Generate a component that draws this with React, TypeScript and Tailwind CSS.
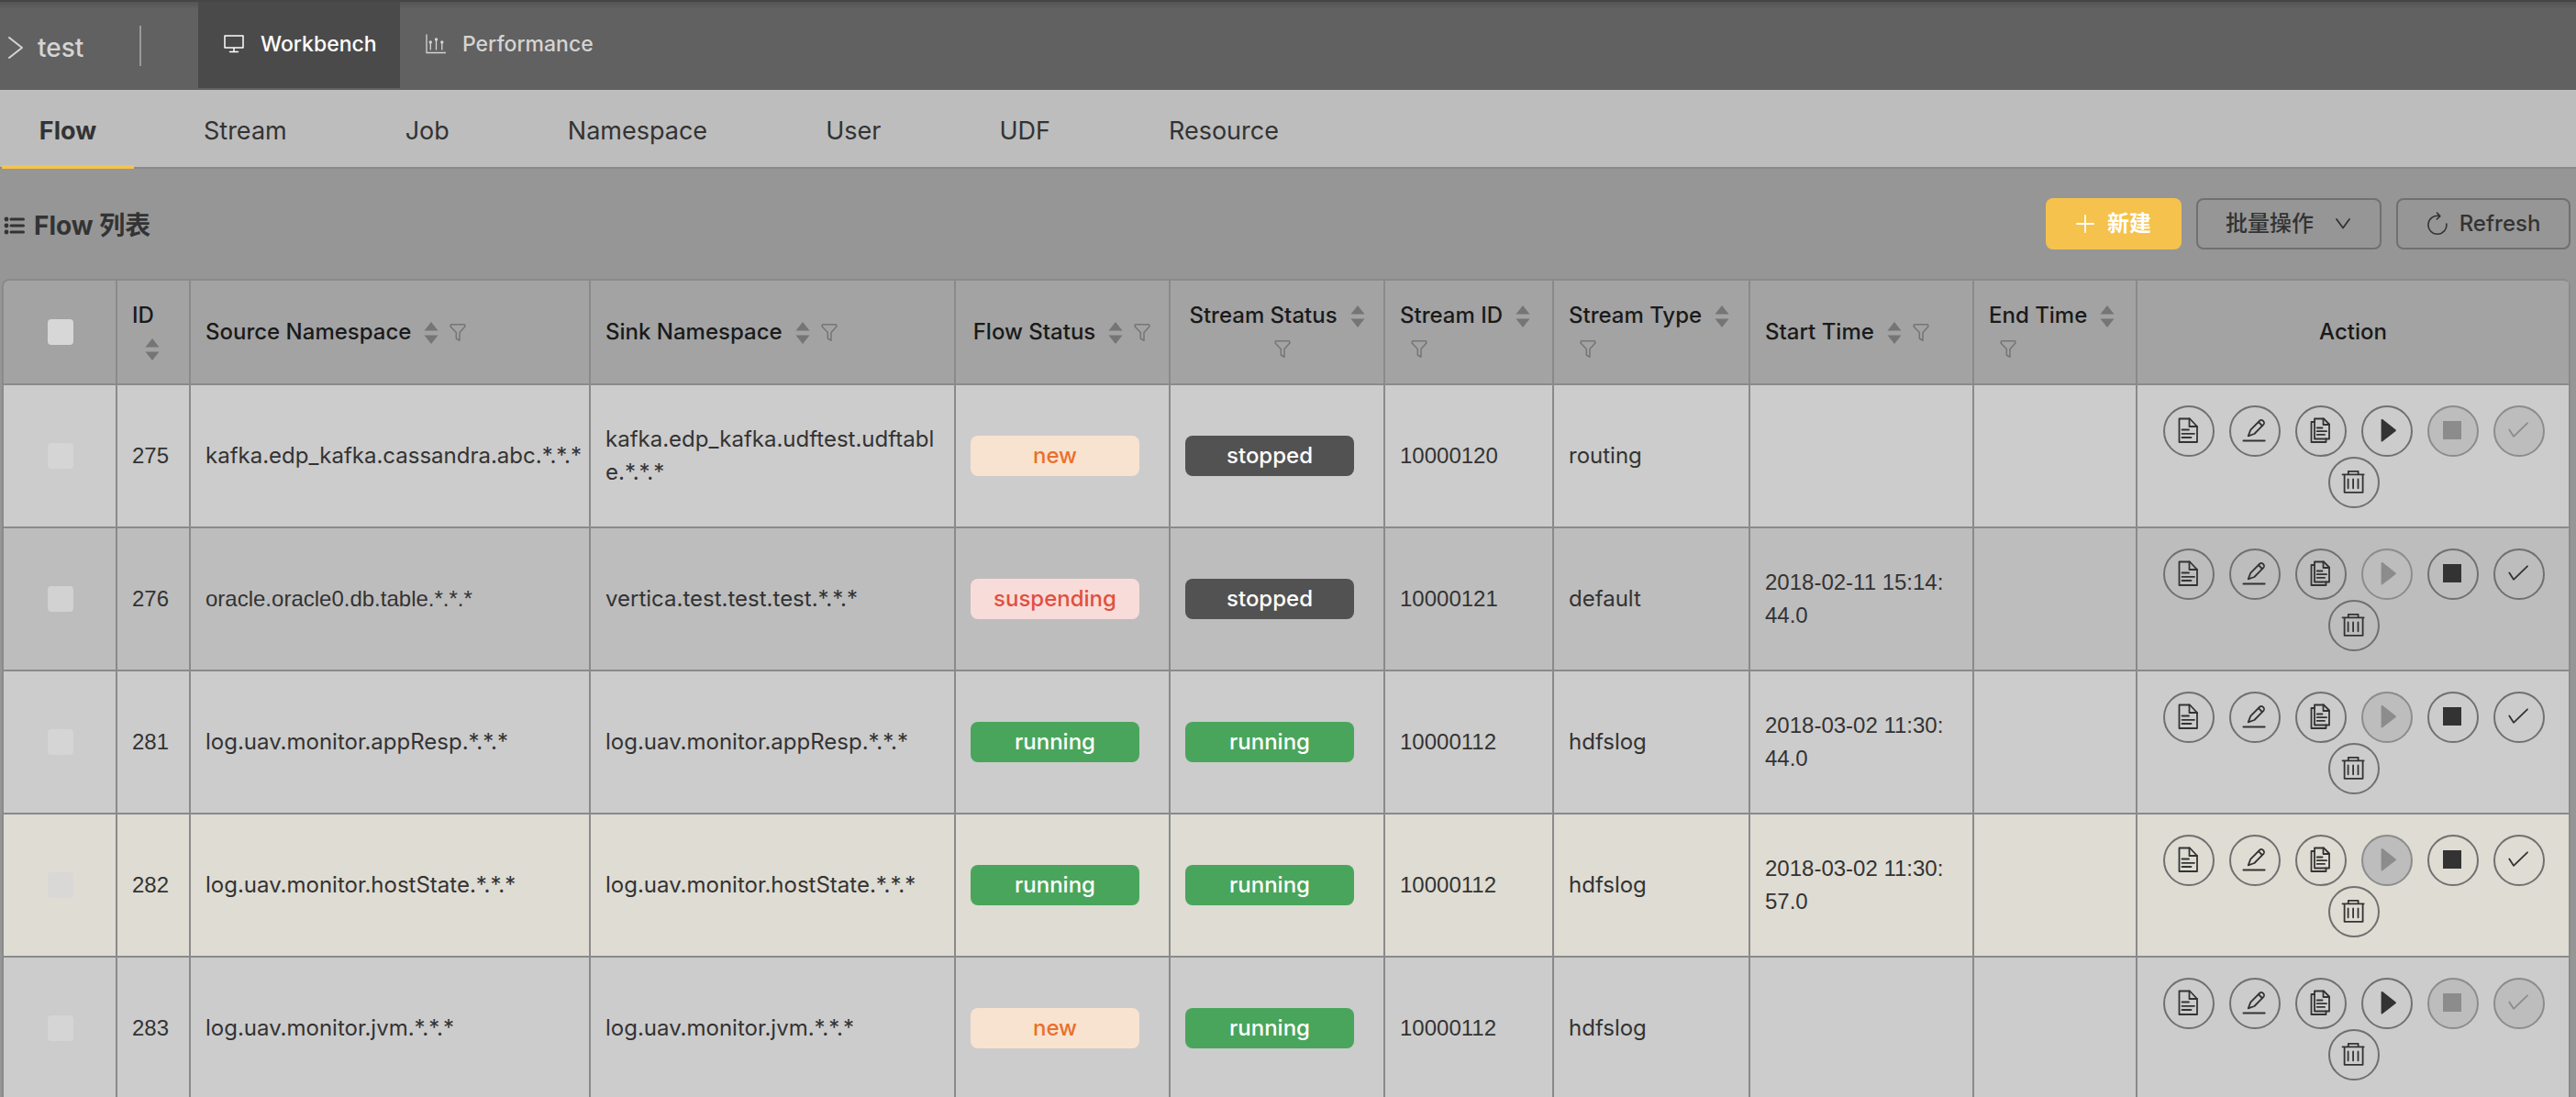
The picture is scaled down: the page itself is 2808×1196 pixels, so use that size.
import React from "react";

type Status = "new" | "stopped" | "suspending" | "running";

interface Flow {
  id: number;
  source: string;
  sink: string;
  flowStatus: Status;
  streamStatus: Status;
  streamId: string;
  streamType: string;
  startTime: string;
  disabled: string[];
  hovered?: boolean;
}

const flows: Flow[] = [
  { id: 275, source: "kafka.edp_kafka.cassandra.abc.*.*.*", sink: "kafka.edp_kafka.udftest.udftable.*.*.*", flowStatus: "new", streamStatus: "stopped", streamId: "10000120", streamType: "routing", startTime: "", disabled: ["stop", "effect"] },
  { id: 276, source: "oracle.oracle0.db.table.*.*.*", sink: "vertica.test.test.test.*.*.*", flowStatus: "suspending", streamStatus: "stopped", streamId: "10000121", streamType: "default", startTime: "2018-02-11 15:14:44.0", disabled: ["start"] },
  { id: 281, source: "log.uav.monitor.appResp.*.*.*", sink: "log.uav.monitor.appResp.*.*.*", flowStatus: "running", streamStatus: "running", streamId: "10000112", streamType: "hdfslog", startTime: "2018-03-02 11:30:44.0", disabled: ["start"] },
  { id: 282, source: "log.uav.monitor.hostState.*.*.*", sink: "log.uav.monitor.hostState.*.*.*", flowStatus: "running", streamStatus: "running", streamId: "10000112", streamType: "hdfslog", startTime: "2018-03-02 11:30:57.0", disabled: ["start"], hovered: true },
  { id: 283, source: "log.uav.monitor.jvm.*.*.*", sink: "log.uav.monitor.jvm.*.*.*", flowStatus: "new", streamStatus: "running", streamId: "10000112", streamType: "hdfslog", startTime: "", disabled: ["stop", "effect"] },
];

const tagStyles: Record<Status, string> = {
  new: "bg-[#f8e3d0] text-[#ea6f2b]",
  suspending: "bg-[#f8dcd9] text-[#e0503f]",
  stopped: "bg-[#525252] text-white",
  running: "bg-[#4aa55c] text-white",
};

const actions: { name: string; icon: React.ReactNode }[] = [
  {
    name: "detail",
    icon: (
      <>
        <path d="M17.5 14.5H29L37 23V40H17.5Z" />
        <path d="M28.5 14.5V23H37M20.5 26.5H28M20.5 30.8H34M20.5 35H30.5" />
      </>
    ),
  },
  {
    name: "edit",
    icon: (
      <>
        <path d="M20.7 33.3L23.3 26.6L33.4 16.5Q35 15.2 36.6 16.6L37.6 17.7Q38.9 19.3 37.6 20.7L27.4 31Z" />
        <path d="M32.2 18.3L35.8 22M15.4 38.5H38.7" />
      </>
    ),
  },
  {
    name: "copy",
    icon: (
      <>
        <path d="M21 14.5H31L37 20.5V36.5H21Z" />
        <path d="M30.5 14.5V21H37M21 18H17.5V40H33.5V36.5M23.7 24.5H29.5M23.7 28.2H34M23.7 31.9H32" />
      </>
    ),
  },
  { name: "start", icon: <path d="M22.5 15.8L37 27.2L22.5 38.6Z" fill="currentColor" /> },
  { name: "stop", icon: <path d="M17 17H37V37H17Z" fill="currentColor" stroke="none" /> },
  { name: "effect", icon: <path d="M17.3 26.5L22 33.8L37 19.3" /> },
  {
    name: "delete",
    icon: (
      <>
        <path d="M15.5 19.3H38.7M21.8 19V15.9H32.6V19M17.6 19.5V38.8H37.6V19.5" />
        <path d="M21.6 24.5V34.3M27.1 24.5V34.3M32.5 24.5V34.3" />
      </>
    ),
  },
];

function Sorter({ label }: { label: string }) {
  return (
    <button type="button" aria-label={"Sort by " + label} className="ml-[14px] inline-block h-6 align-middle">
      <svg width="16" height="24" viewBox="0 0 16 24" className="text-[#757575]" fill="currentColor">
        <path d="M8 0L15.5 9.5H0.5ZM8 24L0.5 14.5H15.5Z" />
      </svg>
    </button>
  );
}

function Filter({ label }: { label: string }) {
  return (
    <button type="button" aria-label={"Filter by " + label} className="ml-[11px] inline-block h-6 align-middle">
      <svg width="20" height="24" viewBox="0 0 20 24" className="text-[#757575]" fill="none" stroke="currentColor" strokeWidth="1.5" strokeLinejoin="round">
        <path d="M2.5 2.8H17.5Q18.6 4.4 17 6L12 11.5V20.3L8.3 18V11.5L3 6Q1.4 4.4 2.5 2.8Z" />
      </svg>
    </button>
  );
}

function Tag({ status }: { status: Status }) {
  return <span className={"mr-4 block rounded-lg text-center font-medium leading-[44px] " + tagStyles[status]}>{status}</span>;
}

const columns: { label: string; width: string; center?: boolean; sort?: boolean; filter?: boolean }[] = [
  { label: "ID", width: "w-20", sort: true },
  { label: "Source Namespace", width: "w-[436px]", sort: true, filter: true },
  { label: "Sink Namespace", width: "w-[398px]", sort: true, filter: true },
  { label: "Flow Status", width: "w-[234px]", center: true, sort: true, filter: true },
  { label: "Stream Status", width: "w-[234px]", center: true, sort: true, filter: true },
  { label: "Stream ID", width: "w-[184px]", sort: true, filter: true },
  { label: "Stream Type", width: "w-[214px]", sort: true, filter: true },
  { label: "Start Time", width: "w-[244px]", sort: true, filter: true },
  { label: "End Time", width: "w-[178px]", sort: true, filter: true },
  { label: "Action", width: "", center: true },
];

const tabs = ["Flow", "Stream", "Job", "Namespace", "User", "UDF", "Resource"];

const border = "border-r-2 border-b-2 border-[#8a8a8a]";
const cell = border + " px-4";
const numeric = "font-['Liberation_Sans',sans-serif] break-all";
const checkbox = "block mx-auto size-7 appearance-none rounded bg-[#d7d7d7]";

export default function App() {
  return (
    <div className="h-screen overflow-hidden bg-[#969696] font-['Inter','Noto_Sans_CJK_SC',sans-serif] text-[24px] leading-9 text-[#333]">
      <header className="flex h-[98px] items-center border-t-2 border-[#454545] bg-[linear-gradient(#555,#616161_8px)] text-[#d4d4d4]">
        <div className="flex w-[152px] items-center gap-4 pl-2 pt-1 text-[28px] font-medium">
          <svg width="17" height="26" viewBox="0 0 17 26" fill="none" stroke="currentColor" strokeWidth="2" strokeLinecap="round" strokeLinejoin="round" aria-hidden="true">
            <path d="M2 2L16 13L2 24" />
          </svg>
          test
        </div>
        <div className="mr-[62px] h-11 w-0.5 bg-[#999]" />
        <nav className="flex h-full pb-0.5 text-[23px] font-medium">
          <a href="#workbench" className="flex w-[220px] items-center gap-[18px] bg-[#4a4a4a] pb-0.5 pl-7 text-white">
            <svg width="22" height="20" viewBox="0 0 22 20" fill="none" stroke="currentColor" strokeWidth="1.5" strokeLinejoin="round" strokeLinecap="round" aria-hidden="true">
              <path d="M1 1H21V14H1ZM11 14V18M6.5 18.5H15.5" />
            </svg>
            Workbench
          </a>
          <a href="#performance" className="flex items-center gap-[18px] pb-0.5 pl-7">
            <svg width="22" height="22" viewBox="0 0 22 22" fill="none" stroke="currentColor" strokeWidth="1.3" strokeLinecap="round" aria-hidden="true">
              <path d="M1 1V20.5H21.5M5.3 17V9M11.5 17V6M17.8 17V9" />
              <g fill="currentColor" stroke="none">
                <circle cx="5.3" cy="9" r="1.7" />
                <circle cx="11.5" cy="6" r="1.7" />
                <circle cx="17.8" cy="9" r="1.7" />
              </g>
            </svg>
            Performance
          </a>
        </nav>
      </header>

      <nav className="flex h-[86px] border-b-2 border-[#8a8a8a] bg-[#bdbdbd] pl-0.5 text-[27px]">
        {tabs.map((tab, i) => (
          <a
            key={tab}
            href={"#" + tab.toLowerCase()}
            className={
              i === 0
                ? "-mb-0.5 mr-9 flex w-36 items-center justify-center border-b-4 border-[#f5c24d] pt-2 font-bold"
                : "mr-[49px] flex items-center px-10 pt-1.5"
            }
          >
            {tab}
          </a>
        ))}
      </nav>

      <main className="pl-0.5 pr-1.5">
        <div className="flex items-center justify-between py-8">
          <h1 className="flex items-center gap-[9px] pl-0.5 pt-1 text-[28px] font-bold">
            <svg width="24" height="22" viewBox="0 0 24 22" fill="none" stroke="currentColor" strokeWidth="3" strokeLinecap="round" aria-hidden="true">
              <path d="M8 4H21.5M8 11H21.5M8 18H21.5" />
              <g fill="currentColor" stroke="none">
                <circle cx="3" cy="4" r="2.4" />
                <circle cx="3" cy="11" r="2.4" />
                <circle cx="3" cy="18" r="2.4" />
              </g>
            </svg>
            <span>Flow 列表</span>
          </h1>
          <div className="flex gap-4">
            <button type="button" className="flex h-14 w-[148px] items-center justify-center gap-3.5 rounded-lg bg-[#f5c24d] font-bold text-white">
              <svg width="20" height="20" viewBox="0 0 20 20" fill="none" stroke="currentColor" strokeWidth="1.8" strokeLinecap="round" aria-hidden="true">
                <path d="M1 10H19M10 1V19" />
              </svg>
              新建
            </button>
            <button type="button" className="flex h-14 w-[202px] items-center justify-center gap-6 rounded-lg border-2 border-[#707070] pr-0.5 font-medium">
              批量操作
              <svg width="16" height="12" viewBox="0 0 16 12" fill="none" stroke="currentColor" strokeWidth="1.8" strokeLinecap="round" strokeLinejoin="round" aria-hidden="true">
                <path d="M1 1L8 10.5L15 1" />
              </svg>
            </button>
            <button type="button" className="flex h-14 w-[190px] items-center justify-center gap-3 rounded-lg border-2 border-[#707070] font-medium">
              <svg width="24" height="26" viewBox="0 0 24 26" fill="none" stroke="currentColor" strokeWidth="1.6" strokeLinecap="round" strokeLinejoin="round" aria-hidden="true">
                <path d="M21.8 13A10 10 0 1 1 13.5 4.4M11.5 1L14.8 4.6L11.3 8" />
              </svg>
              Refresh
            </button>
          </div>
        </div>

        <table className="w-full table-fixed border-separate border-spacing-0 overflow-hidden rounded-t-lg border-l-2 border-t-2 border-[#8a8a8a]">
          <thead>
            <tr className="h-[114px] bg-[#a3a3a3] text-[#1a1a1a]">
              <th className={border + " w-[124px] pl-0.5"}>
                <input type="checkbox" aria-label="Select all flows" className={checkbox} />
              </th>
              {columns.map((c) => (
                <th key={c.label} className={[cell, c.width, "font-medium", c.center ? "text-center" : "text-left"].join(" ")}>
                  {c.label}
                  {c.sort && <Sorter label={c.label} />}
                  {c.filter && <Filter label={c.label} />}
                </th>
              ))}
            </tr>
          </thead>
          <tbody>
            {flows.map((f) => {
              const family = f.id === 276 ? " font-['Liberation_Sans',sans-serif]" : "";
              return (
                <tr key={f.id} className={"h-[156px] " + (f.hovered ? "bg-[#dedcd3]" : f.id === 276 ? "bg-[#bdbdbd]" : "bg-[#ccc]")}>
                  <td className={border + " pl-0.5"}>
                    <input type="checkbox" aria-label={"Select flow " + f.id} className={checkbox + " opacity-80"} />
                  </td>
                  <td className={[cell, numeric].join(" ")}>{f.id}</td>
                  <td className={cell + " whitespace-nowrap" + family}>{f.source}</td>
                  <td className={cell + " break-all"}>{f.sink}</td>
                  <td className={cell}>
                    <Tag status={f.flowStatus} />
                  </td>
                  <td className={cell}>
                    <Tag status={f.streamStatus} />
                  </td>
                  <td className={[cell, numeric].join(" ")}>{f.streamId}</td>
                  <td className={cell}>{f.streamType}</td>
                  <td className={[border, "pl-4 pr-7", numeric].join(" ")}>{f.startTime}</td>
                  <td className={cell} />
                  <td className={border + " pl-[18px] pr-4 pt-0.5"}>
                    <div className="flex flex-wrap justify-center gap-x-4">
                      {actions.map((a) => {
                        const off = f.disabled.includes(a.name);
                        return (
                          <button
                            key={a.name}
                            type="button"
                            disabled={off}
                            aria-label={a.name + " flow " + f.id}
                            className={"size-14 rounded-full border-2 " + (off ? "border-[#8c8c8c] bg-[#bdbdbd] text-[#8c8c8c]" : "border-[#707070]")}
                          >
                            <svg viewBox="2 2 52 52" className="size-full" fill="none" stroke="currentColor" strokeWidth="1.8" strokeLinecap="round" strokeLinejoin="round">
                              {a.icon}
                            </svg>
                          </button>
                        );
                      })}
                    </div>
                  </td>
                </tr>
              );
            })}
          </tbody>
        </table>
      </main>
    </div>
  );
}
